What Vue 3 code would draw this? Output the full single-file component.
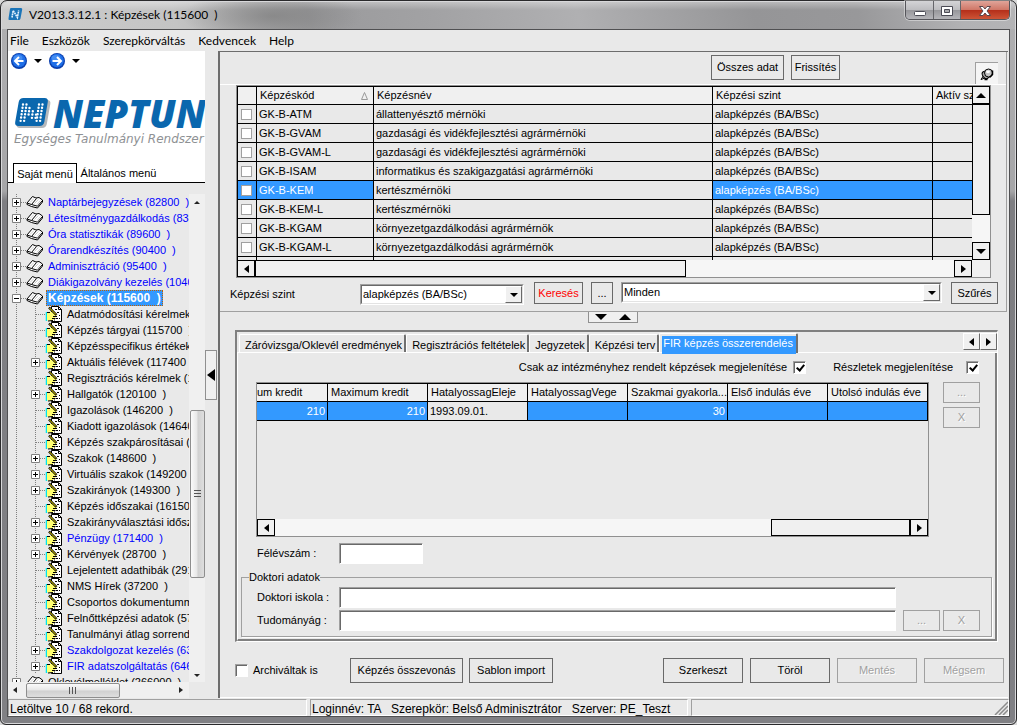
<script setup>
import { ref } from 'vue'

const title = 'V2013.3.12.1 : Képzések (115600  )'
const session = 'Loginnév: TA   Szerepkör: Belső Adminisztrátor   Szerver: PE_Teszt'
const menus = ['File', 'Eszközök', 'Szerepkörváltás', 'Kedvencek', 'Help']

const tree = [
  { t: 'Naptárbejegyzések (82800  )', top: true, plus: '+', blue: true },
  { t: 'Létesítménygazdálkodás (83400  )', top: true, plus: '+', blue: true },
  { t: 'Óra statisztikák (89600  )', top: true, plus: '+', blue: true },
  { t: 'Órarendkészítés (90400  )', top: true, plus: '+', blue: true },
  { t: 'Adminisztráció (95400  )', top: true, plus: '+', blue: true },
  { t: 'Diákigazolvány kezelés (104000  )', top: true, plus: '+', blue: true },
  { t: 'Képzések (115600  )', top: true, plus: '-', selected: true },
  { t: 'Adatmódosítási kérelmek' },
  { t: 'Képzés tárgyai (115700  )' },
  { t: 'Képzésspecifikus értékek' },
  { t: 'Aktuális félévek (117400  )', plus: '+' },
  { t: 'Regisztrációs kérelmek (118000  )' },
  { t: 'Hallgatók (120100  )', plus: '+' },
  { t: 'Igazolások (146200  )' },
  { t: 'Kiadott igazolások (146400  )' },
  { t: 'Képzés szakpárosításai (147000  )' },
  { t: 'Szakok (148600  )', plus: '+' },
  { t: 'Virtuális szakok (149200  )', plus: '+' },
  { t: 'Szakirányok (149300  )', plus: '+' },
  { t: 'Képzés időszakai (161500  )' },
  { t: 'Szakirányválasztási időszakok', plus: '+' },
  { t: 'Pénzügy (171400  )', plus: '+', blue: true },
  { t: 'Kérvények (28700  )', plus: '+' },
  { t: 'Lejelentett adathibák (29100  )' },
  { t: 'NMS Hírek (37200  )' },
  { t: 'Csoportos dokumentummentés' },
  { t: 'Felnőttképzési adatok (57000  )' },
  { t: 'Tanulmányi átlag sorrend' },
  { t: 'Szakdolgozat kezelés (63000  )', plus: '+', blue: true },
  { t: 'FIR adatszolgáltatás (64600  )', plus: '+', blue: true },
  { t: 'Oklevélmelléklet (266000  )', top: true, plus: '+' },
]

const rows = [
  ['GK-B-ATM', 'állattenyésztő mérnöki'],
  ['GK-B-GVAM', 'gazdasági és vidékfejlesztési agrármérnöki'],
  ['GK-B-GVAM-L', 'gazdasági és vidékfejlesztési agrármérnöki'],
  ['GK-B-ISAM', 'informatikus és szakigazgatási agrármérnöki'],
  ['GK-B-KEM', 'kertészmérnöki'],
  ['GK-B-KEM-L', 'kertészmérnöki'],
  ['GK-B-KGAM', 'környezetgazdálkodási agrármérnök'],
  ['GK-B-KGAM-L', 'környezetgazdálkodási agrármérnök'],
]
const current = ref(4)

const tabs = [
  'Záróvizsga/Oklevél eredmények',
  'Regisztrációs feltételek',
  'Jegyzetek',
  'Képzési terv',
  'FIR képzés összerendelés',
]
const activeTab = ref(4)
const onlyAssigned = ref(true)
const details = ref(true)
const archived = ref(false)
</script>

<template>
  <div class="window">
    <header class="titlebar">
      <svg class="app-icon" width="15" height="14" viewBox="0 0 15 14" aria-hidden="true">
        <path d="M3 1h10q1.500 0 1.200 1.500l-1.700 9q-.3 1.500-1.800 1.500H1.500Q.2 13 .5 11.500L2 2Q2.200 1 3 1z" fill="#1a74b8" />
        <path d="M4 10.500l1.200-7 4.200 7 1.300-7" fill="none" stroke="#e4f3ff" stroke-width="1.600" stroke-dasharray="1.800 .6" />
      </svg>
      <h1 class="title">{{ title }}</h1>
      <div class="caption">
        <button class="cap min" aria-label="Kis méret">
          <svg width="14" height="12" viewBox="0 0 14 12"><rect x="1.500" y="6.500" width="11" height="4" rx="1" fill="#fff" stroke="#4b4b55" /></svg>
        </button>
        <button class="cap max" aria-label="Teljes méret">
          <svg width="14" height="12" viewBox="0 0 14 12"><path d="M1.500 1.500h11v9h-11z" fill="#fff" stroke="#4b4b55" /><path d="M4.500 4.500h5v3h-5z" fill="#a9a9ad" stroke="#4b4b55" /></svg>
        </button>
        <button class="cap close" aria-label="Bezárás">
          <svg width="14" height="12" viewBox="0 0 14 12"><path d="M1.500 1.500h3.500l2 2.500 2-2.500h3.500L9 6l3.500 4.500H9L7 8l-2 2.500H1.500L5 6z" fill="#fff" stroke="#57454b" /></svg>
        </button>
      </div>
    </header>

    <div class="client">
      <nav class="menubar">
        <button v-for="m in menus" :key="m" class="menu">{{ m }}</button>
      </nav>

      <div class="body">
        <aside class="side">
          <div class="brand">
            <div class="history">
              <button class="nav-btn" aria-label="Vissza">
                <svg width="16" height="16" viewBox="0 0 16 16"><circle cx="8" cy="8" r="8" fill="#0b3fae" /><circle cx="8" cy="7.500" r="6.800" fill="#1f6fe8" /><ellipse cx="7" cy="5" rx="4.500" ry="3" fill="#5aa0f8" opacity=".6" /><path d="M12.500 8H4.500M8 4L4 8l4 4" fill="none" stroke="#fff" stroke-width="2" /></svg>
              </button>
              <button class="drop" aria-label="Előzmények"><i class="tri down"></i></button>
              <button class="nav-btn" aria-label="Előre">
                <svg width="16" height="16" viewBox="0 0 16 16"><circle cx="8" cy="8" r="8" fill="#0b3fae" /><circle cx="8" cy="7.500" r="6.800" fill="#1f6fe8" /><ellipse cx="7" cy="5" rx="4.500" ry="3" fill="#5aa0f8" opacity=".6" /><path d="M3.500 8h8M8 4l4 4-4 4" fill="none" stroke="#fff" stroke-width="2" /></svg>
              </button>
              <button class="drop" aria-label="Következők"><i class="tri down"></i></button>
            </div>
            <div class="logo">
              <svg class="logo-mark" width="38" height="33" viewBox="0 0 38 33" aria-hidden="true">
                <path d="M11 3h22q4 0 3.300 4l-3.500 20q-.8 4-4.800 4H6q-4 0-3.300-4L6.200 7Q7 3 11 3z" fill="#b5b8bb" />
                <path d="M9.500 1h21q4 0 3.300 4l-3.500 20q-.8 4-4.800 4H4.500q-4 0-3.300-4L4.700 5Q5.500 1 9.500 1z" fill="#0a67ae" />
                <g fill="none" stroke="#fff" stroke-width="2.400" stroke-linecap="round">
                  <path d="M9 7.500L6.600 24" stroke-dasharray="0 3.300" />
                  <path d="M12.500 7.500L10.100 24" stroke-dasharray="0 3.300" />
                  <path d="M15.500 11L14.600 17.600" stroke-dasharray="0 3.300" />
                  <path d="M18.800 14.300L17.900 21" stroke-dasharray="0 3.300" />
                  <path d="M22 17.600L21.100 24" stroke-dasharray="0 3.300" />
                  <path d="M25 7.500L22.600 24" stroke-dasharray="0 3.300" />
                  <path d="M28.500 7.500L26.100 24" stroke-dasharray="0 3.300" />
                </g>
              </svg>
              <span class="logo-text">NEPTUN</span>
            </div>
            <div class="tagline">Egységes Tanulmányi Rendszer</div>
            <div class="side-tabs" role="tablist">
              <button class="side-tab on" role="tab">Saját menü</button>
              <button class="side-tab" role="tab">Általános menü</button>
            </div>
          </div>

          <div class="tree-wrap">
            <div class="tree-col">
              <ul class="tree">
                <li v-for="n in tree" :key="n.t" :class="['node', { blue: n.blue, sel: n.selected }]">
                  <svg v-if="n.top" width="38" height="16" viewBox="0 0 38 16" aria-hidden="true">
                    <path d="M8.500 0v16M13 8.500h6" stroke="#808080" stroke-dasharray="1 1" fill="none" />
                    <path d="M4.500 4.500h8v8h-8z" fill="#fff" stroke="#808080" />
                    <path :d="n.plus === '+' ? 'M6 8.500h5M8.500 6v5' : 'M6 8.500h5'" stroke="#000" fill="none" />
                    <path d="M19 9l5.500-6.500 3.500 1.500 3-.5 3.500 2.500v2l-5 6-6-1.500-4.500-2z" fill="#fff" stroke="#000" />
                    <path d="M19 9l4.500 1.500L28.500 4.500M23.500 10.500l6 1.700L34.500 6.500" fill="none" stroke="#000" />
                    <path d="M22 8.500l4-4M26.500 9.500l4-4M29 10.500l3.500-4" fill="none" stroke="#b8b8b8" stroke-width=".7" />
                  </svg>
                  <svg v-else width="57" height="16" viewBox="0 0 57 16" aria-hidden="true">
                    <path d="M8.500 0v16M27.500 0v16M28 8.500h9" stroke="#808080" stroke-dasharray="1 1" fill="none" />
                    <template v-if="n.plus">
                      <path d="M23.500 4.500h8v8h-8z" fill="#fff" stroke="#808080" />
                      <path d="M25 8.500h5M27.500 6v5" stroke="#000" fill="none" />
                    </template>
                    <path d="M43.500.5h7l3 3v12h-10z" fill="#fff" stroke="#000" />
                    <path d="M50.500.5v3h3" fill="none" stroke="#000" />
                    <path d="M47 3.500h2M49 6.500h2M51 9.500h1M48 12.500h2M51 12.500h1M46 14h1" fill="none" stroke="#000" />
                    <path d="M38.500 6v9" stroke="#00e5ee" stroke-width="1.500" />
                    <path d="M39 6.500l4-1 5 2.500 1 1.500-2 1 .5 1.500-1.500 1-1 1.500-4 .5-2-1z" fill="#ffff70" />
                    <path d="M39 6.500h3M45 10.500h4M44 12.500h3.500M40 15l5-.5" fill="none" stroke="#000" />
                    <path d="M41 1.500l7.500 7.500" stroke="#000" stroke-width="2.400" />
                    <path d="M41.500 2l6.500 6.500" stroke="#ffee00" stroke-width="1" />
                  </svg>
                  <span class="node-text">{{ n.t }}</span>
                </li>
              </ul>
              <div class="w7 h">
                <i class="tri left sm"></i><div class="w7-thumb-h"><i></i><i></i><i></i></div><i class="tri right sm push"></i>
              </div>
            </div>
            <div class="w7 v">
              <i class="tri up sm"></i>
              <div class="w7-thumb-v"><i></i><i></i><i></i></div>
              <i class="tri down sm"></i>
            </div>
          </div>
        </aside>

        <div class="split"><button class="split-btn" aria-label="Menü elrejtése"><i class="tri left big"></i></button></div>

        <main class="main">
          <section class="upper">
            <div class="tools">
              <button class="btn">Összes adat</button>
              <button class="btn fresh">Frissítés</button>
              <button class="pin" aria-label="Rögzítés">
                <svg width="14" height="14" viewBox="0 0 14 14"><path d="M4 8l-3 4.500L5 11z" fill="#fff" stroke="#000" /><ellipse cx="5.500" cy="8" rx="2.800" ry="4" transform="rotate(-35 5.500 8)" fill="#a8a8a8" stroke="#000" /><ellipse cx="8.500" cy="6" rx="4" ry="4" fill="#c4c4c4" stroke="#000" /><ellipse cx="8" cy="4.800" rx="2" ry="1.400" fill="#fff" /><path d="M12.500 3.500v4l-3 3M4.500 12.500h3" fill="none" stroke="#000" stroke-width="1.500" /></svg>
              </button>
            </div>

            <div class="gridbox">
              <div class="gridmain">
                <div class="table-clip">
                  <table class="grid">
                    <colgroup><col class="c1" /><col class="c2" /><col /><col class="c4" /><col class="c5" /></colgroup>
                    <thead>
                      <tr>
                        <th></th>
                        <th><span class="sorted">Képzéskód <svg width="7" height="8" viewBox="0 0 7 8"><path d="M.5 7.500L3.500.5l3 7z" fill="none" stroke="#999" /></svg></span></th>
                        <th>Képzésnév</th><th>Képzési szint</th><th>Aktív szakok</th>
                      </tr>
                    </thead>
                    <tbody>
                      <tr v-for="(r, i) in rows" :key="r[0]" :class="{ cur: i === current }" @click="current = i">
                        <td class="chk"><input type="checkbox" :aria-label="r[0]" /></td>
                        <td>{{ r[0] }}</td><td class="name">{{ r[1] }}</td><td>alapképzés (BA/BSc)</td><td></td>
                      </tr>
                      <tr><td></td><td></td><td class="name"></td><td></td><td></td></tr>
                    </tbody>
                  </table>
                </div>
                <div class="sb h">
                  <button class="sbb" aria-label="Balra"><i class="tri left"></i></button>
                  <div class="thumb t1"></div><div class="track"></div>
                  <button class="sbb" aria-label="Jobbra"><i class="tri right"></i></button>
                </div>
              </div>
              <div class="sb v">
                <button class="sbb" aria-label="Fel"><i class="tri up wide5"></i></button>
                <div class="thumb t2"></div><div class="track"></div>
                <button class="sbb" aria-label="Le"><i class="tri down wide5"></i></button>
              </div>
            </div>

            <div class="filter">
              <label for="level" class="filter-label">Képzési szint</label>
              <div class="combo level">
                <select id="level"><option>alapképzés (BA/BSc)</option></select>
                <span class="combo-arrow"><i class="tri down"></i></span>
              </div>
              <button class="btn low search">Keresés</button>
              <button class="btn low dots">...</button>
              <div class="combo all">
                <select aria-label="Szűrő"><option>Minden</option></select>
                <span class="combo-arrow"><i class="tri down"></i></span>
              </div>
              <button class="btn low szur">Szűrés</button>
            </div>
          </section>

          <div class="hsplit">
            <button aria-label="Lefelé"><i class="tri down big"></i></button><button aria-label="Felfelé"><i class="tri up big"></i></button>
          </div>

          <section class="tabbox">
            <div class="tabs" role="tablist">
              <button v-for="(t, i) in tabs" :key="t" role="tab" :class="['tab', { on: i === activeTab }]" @click="activeTab = i"><span>{{ t }}</span></button>
              <div class="tabnav">
                <button aria-label="Előző lap"><i class="tri left"></i></button><button aria-label="Következő lap"><i class="tri right"></i></button>
              </div>
            </div>
            <div class="page">
              <div class="checks">
                <label class="ck">Csak az intézményhez rendelt képzések megjelenítése <input v-model="onlyAssigned" class="cb" type="checkbox" /></label>
                <label class="ck wide">Részletek megjelenítése <input v-model="details" class="cb" type="checkbox" /></label>
              </div>
              <div class="fir">
                <div class="firgrid">
                  <div class="fir-clip">
                    <table class="grid two">
                      <colgroup><col class="f1" /><col /><col /><col /><col /><col /><col /></colgroup>
                      <thead>
                        <tr><th class="cut">um kredit</th><th>Maximum kredit</th><th>HatalyossagEleje</th><th>HatalyossagVege</th><th>Szakmai gyakorla...</th><th>Első indulás éve</th><th>Utolsó indulás éve</th></tr>
                      </thead>
                      <tbody>
                        <tr class="cur"><td class="num">210</td><td class="num">210</td><td class="name">1993.09.01.</td><td></td><td class="num">30</td><td></td><td></td></tr>
                      </tbody>
                    </table>
                  </div>
                  <div class="sb h">
                    <button class="sbb" aria-label="Balra"><i class="tri left"></i></button>
                    <div class="track"></div><div class="thumb t3"></div>
                    <button class="sbb" aria-label="Jobbra"><i class="tri right"></i></button>
                  </div>
                </div>
                <div class="firbtns">
                  <button class="btn small" disabled>...</button>
                  <button class="btn small" disabled>X</button>
                </div>
              </div>
              <div class="field first"><label for="fel">Félévszám :</label><input id="fel" class="tb short" type="text" /></div>
              <fieldset class="doc">
                <legend>Doktori adatok</legend>
                <div class="field"><label for="isk">Doktori iskola :</label><input id="isk" class="tb" type="text" /><span class="gap"></span></div>
                <div class="field"><label for="tud">Tudományág :</label><input id="tud" class="tb" type="text" />
                  <span class="gap"><button class="btn small" disabled>...</button><button class="btn small" disabled>X</button></span>
                </div>
              </fieldset>
            </div>
          </section>

          <footer class="actions">
            <label class="arch"><input v-model="archived" class="cb" type="checkbox" /> Archiváltak is</label>
            <button class="btn merge">Képzés összevonás</button>
            <button class="btn import">Sablon import</button>
            <span class="record-actions">
              <button class="btn act">Szerkeszt</button>
              <button class="btn act">Töröl</button>
              <button class="btn act" disabled>Mentés</button>
              <button class="btn act" disabled>Mégsem</button>
            </span>
          </footer>
        </main>
      </div>

      <div class="status">
        <div class="cell s1">Letöltve 10 / 68 rekord.</div>
        <div class="cell s2">{{ session }}</div>
        <div class="cell s3">
          <svg width="14" height="14" viewBox="0 0 14 14" aria-hidden="true"><path d="M1 14L14 1M5 14l9-9M9 14l5-5" stroke="#8c8c8c" stroke-width="1.500" /></svg>
        </div>
      </div>
    </div>
  </div>
</template>

<style>
body { background: #d8d8d8; overflow: hidden; }
</style>

<style scoped>
* { box-sizing: border-box; }
button, input, select { font: inherit; color: inherit; margin: 0; padding: 0; border-radius: 0; }
button { background: none; border: 0; white-space: nowrap; }
svg { display: block; flex: none; }

.window {
  height: 100vh; display: flex; flex-direction: column;
  border: 1px solid #2a2a2c; border-radius: 7px 7px 6px 6px;
  padding: 0 6px 7px;
  background: linear-gradient(#b0b0b2 0, #a6a6a8 190px, #7e7e82 200px, #808084 100%);
  box-shadow: inset 0 0 0 1px #d8d8da;
  font: 11px/13px "Liberation Sans", Arial, sans-serif; color: #000;
}
.titlebar {
  flex: none; height: 27px; display: flex; align-items: flex-start; margin: 1px -5px 0; padding-left: 6px;
  border-radius: 5px 5px 0 0;
  background:
    radial-gradient(ellipse 90px 26px at 270px 14px, #77777799, #77777700),
    linear-gradient(#ffffff55, #ffffff00 8px),
    linear-gradient(75deg, #cdcdcd 0, #c4c4c4 170px, #9a9a9c 300px, #a2a2a4 420px, #b0b0b2 560px, #959597 730px, #98989a 830px, #b2b2b4 930px, #b4b4b6 100%);
}
.app-icon { margin-top: 5px; }
.title { margin: 5px 0 0 6px; font: 12px/16px Lato, "Open Sans", sans-serif; white-space: pre; }
.caption { display: flex; margin: -1px 5px 0 auto; height: 19px; border: 1px solid #55555a; border-top: 0; border-radius: 0 0 5px 5px; overflow: hidden; box-shadow: 0 0 0 1px #ffffff66; }
.cap { width: 28px; height: 19px; display: flex; justify-content: center; align-items: center; background: linear-gradient(#d4d4d6, #bcbcbf 48%, #98989c 50%, #b8b8bc); border-right: 1px solid #66666a; }
.max { width: 27px; }
.close { width: 48px; border: 0; background: linear-gradient(#e0a499, #cf7565 48%, #b5301b 50%, #d0593a); }

.client { flex: 1; min-height: 0; display: flex; flex-direction: column; background: #e9e9e9; border: 1px solid #505052; }
.menubar { flex: none; height: 21px; display: flex; align-items: center; padding-left: 2px; gap: 13px; font: 12px/16px Lato, "Open Sans", sans-serif; }
.body { flex: 1; min-height: 0; display: flex; }

.side { width: 197px; flex: none; display: flex; flex-direction: column; overflow: hidden; }
.brand { flex: none; background: #fff; display: flex; flex-direction: column; overflow: hidden; }
.history { height: 20px; display: flex; align-items: center; padding-left: 3px; }
.nav-btn { width: 16px; height: 16px; }
.drop { width: 22px; height: 16px; display: flex; align-items: center; justify-content: center; }
.logo { height: 59px; padding: 26px 0 0 6px; display: flex; align-items: flex-start; gap: 1px; }
.logo-text { color: #0a67ae; font: italic 800 38px/33px "Open Sans", "Noto Sans", sans-serif; }
.tagline { padding-left: 6px; height: 18px; color: #8e9194; font: italic 12px/18px "DejaVu Sans", Verdana, sans-serif; white-space: nowrap; }
.side-tabs { display: flex; margin-top: 15px; height: 20px; align-items: stretch; border-bottom: 1px solid #000; }
.side-tab { width: 83px; padding-top: 2px; }
.side-tab.on { width: 64px; margin: 0 0 -1px 5px; border: 1px solid #000; border-bottom: 0; background: #fff; }

.tree-wrap { flex: 1; min-height: 0; display: flex; margin-top: 11px; }
.tree-col { width: 181px; display: flex; flex-direction: column; background: #ececec; }
.tree { flex: 1; min-height: 0; overflow: hidden; margin: 0; padding: 0; list-style: none; background: #e9e9e9; }
.node { display: flex; align-items: center; height: 16px; white-space: pre; }
.node-text { padding: 0 2px; height: 16px; line-height: 16px; }
.blue { color: #0000ff; }
.sel .node-text { background: #3399ff; color: #fff; font-weight: bold; font-size: 12px; outline: 1px dotted #c06000; outline-offset: -1px; }
.w7 { flex: none; display: flex; background: #f0f0f0; align-items: center; }
.w7.h { height: 16px; padding: 0 6px 0 5px; }
.w7.v { width: 16px; flex-direction: column; margin-bottom: 16px; padding: 7px 0 5px; }
.w7-thumb-h { width: 94px; height: 15px; margin-left: 9px; border: 1px solid #8e8e8e; border-radius: 2px; background: linear-gradient(#fafafa, #e6e6e6 48%, #d0d0d0 52%, #dedede); display: flex; gap: 1px; justify-content: center; align-items: center; }
.w7-thumb-h i { width: 2px; height: 7px; border-left: 1px solid #555; }
.w7-thumb-v { margin: auto 0 96px; height: 168px; width: 15px; border: 1px solid #8e8e8e; border-radius: 2px; background: linear-gradient(90deg, #fafafa, #e6e6e6 48%, #d0d0d0 52%, #dedede); display: flex; flex-direction: column; gap: 1px; align-items: center; justify-content: center; }
.w7-thumb-v i { height: 2px; width: 7px; border-top: 1px solid #555; }
.push { margin-left: auto; }

.tri { display: block; flex: none; width: 0; height: 0; border: 4px solid transparent; }
.tri.down { border-top-color: #000; border-bottom: 0; }
.tri.up { border-bottom-color: #000; border-top: 0; }
.tri.left { border-right: 5px solid #000; border-left: 0; }
.tri.right { border-left: 5px solid #000; border-right: 0; }
.tri.wide5 { border-left-width: 5px; border-right-width: 5px; }
.tri.wide5.up { border-bottom-width: 5px; }
.tri.wide5.down { border-top-width: 5px; }
.tri.sm { border-width: 3px; opacity: .85; }
.tri.sm.down { border-bottom: 0; }
.tri.sm.up { border-top: 0; }
.tri.sm.left { border-left: 0; border-right-width: 4px; }
.tri.sm.right { border-right: 0; border-left-width: 4px; }
.tri.big { border-width: 6px; }
.tri.big.down { border-bottom: 0; }
.tri.big.up { border-top: 0; }
.tri.big.left { border-left: 0; border-right-width: 8px; }

.split { width: 13px; flex: none; display: flex; align-items: center; }
.split-btn { width: 12px; height: 50px; border: 1px solid #909090; background: #f0f0f0; display: flex; align-items: center; padding-left: 1px; }

.main { flex: 1; min-width: 0; display: flex; flex-direction: column; border-left: 2px solid #6d6d6d; border-top: 1px solid #6d6d6d; margin-right: 1px; }
.btn { height: 25px; border: 1px solid #696969; background: #e9e9e9; text-align: center; flex: none; }
.btn:disabled { color: #a0a0a0; text-shadow: 1px 1px #fff; border-color: #a0a0a0; }
.low { height: 22px; }

.upper { flex: none; border-right: 1px solid #a0a0a0; border-bottom: 1px solid #a0a0a0; margin-right: 1px; }
.tools { height: 33px; display: flex; justify-content: flex-end; padding: 3px 8px 0 0; gap: 7px; border-bottom: 1px solid #fff; }
.tools .btn { width: 73px; }
.tools .fresh { width: 49px; }
.pin { width: 23px; height: 22px; margin: 7px 0 0 128px; border-left: 1px solid #a0a0a0; border-top: 1px solid #a0a0a0; background: #f5f5f5; display: flex; align-items: center; justify-content: center; }
.gridbox { margin: 0 15px 0 16px; display: flex; border: 1px solid #909090; background: #f0f0f0; }
.gridmain { flex: 1; min-width: 0; display: flex; flex-direction: column; }
.table-clip { height: 174px; overflow: hidden; border-left: 1px solid #000; border-top: 1px solid #000; background: #e9e9e9; }
.grid { width: 100%; table-layout: fixed; border-collapse: separate; border-spacing: 0; }
.grid th { height: 18px; padding: 0 2px 0 3px; text-align: left; font-weight: normal; background: #f0f0f0; overflow: hidden; white-space: nowrap; border-right: 1px solid #000; border-bottom: 1px solid #000; }
.grid td { height: 19px; padding: 0 2px 0 2px; border-right: 1px solid #000; border-bottom: 1px solid #000; white-space: nowrap; overflow: hidden; }
.grid th:last-child, .grid td:last-child { border-right: 0; }
.c1 { width: 19px; } .c2 { width: 117px; } .c4 { width: 220px; } .c5 { width: 39px; }
.sorted { display: flex; align-items: center; justify-content: space-between; padding-right: 3px; }
.grid .chk { padding: 0 3px; }
.chk input { appearance: none; display: block; width: 11px; height: 11px; border: 1px solid #a0a0a0; background: #fff; }
.cur td { background: #3399ff; color: #fff; }
.cur .name { background: #e9e9e9; color: #000; }

.sb { display: flex; flex: none; }
.sb.h { height: 17px; }
.sb.v { width: 18px; flex-direction: column; margin-bottom: 17px; }
.sbb { width: 18px; height: 17px; flex: none; border: 1px solid #000; background: #f0f0f0; display: flex; align-items: center; justify-content: center; }
.sb.v .sbb { height: 18px; }
.track { flex: 1; background: #f6f6f6; }
.thumb { border: 1px solid #000; background: #f0f0f0; flex: none; }
.t1 { width: 60%; max-width: 431px; }
.t2 { height: 111px; }
.t3 { width: 139px; }

.filter { height: 33px; display: flex; padding: 4px 8px 0 10px; align-items: flex-start; }
.filter-label { width: 130px; padding-top: 6px; }
.combo { position: relative; height: 21px; margin-top: 2px; border: 1px solid #a0a0a0; border-right-color: #fff; border-bottom-color: #fff; }
.combo select { display: block; appearance: none; width: 100%; height: 100%; border: 1px solid #696969; border-right-color: #e3e3e3; border-bottom-color: #e3e3e3; background: #fff; padding-left: 1px; }
.combo-arrow { position: absolute; right: 1px; top: 1px; bottom: 1px; width: 17px; background: #f0f0f0; border: 1px solid #fff; border-right-color: #696969; border-bottom-color: #696969; display: flex; align-items: center; justify-content: center; pointer-events: none; }
.level { width: 164px; }
.search { width: 49px; margin-left: 10px; color: #ff0000; }
.dots { width: 22px; margin: 0 8px; }
.all { flex: 1; margin-top: 0; }
.szur { width: 47px; margin-left: 9px; }

.hsplit { flex: none; width: 50px; height: 11px; margin-left: 368px; border: 1px solid #909090; border-top: 0; background: #f0f0f0; display: flex; align-items: center; justify-content: space-around; }

.tabbox { flex: 1; min-height: 0; margin: 7px 10px 0 15px; border: 2px solid #808080; border-right: 1px solid #fff; border-bottom: 1px solid #fff; display: flex; flex-direction: column; padding-top: 1px; }
.tabs { flex: none; height: 20px; display: flex; align-items: flex-end; border-bottom: 1px solid #fff; padding-left: 2px; }
.tab { height: 18px; padding: 3px 2px 0 5px; border-left: 1px solid #fff; border-top: 1px solid #fff; border-right: 2px solid #707070; border-radius: 2px 2px 0 0; }
.tab.on { height: 20px; margin-bottom: -1px; padding: 2px 0 0 2px; min-width: 139px; text-align: left; }
.tab.on span { display: block; height: 18px; line-height: 15px; background: #3399ff; color: #fff; padding-left: 1px; }
.tabnav { margin: 0 0 auto auto; display: flex; }
.tabnav button { width: 17px; height: 17px; border: 1px solid #fff; border-right-color: #696969; border-bottom-color: #696969; display: flex; align-items: center; justify-content: center; background: #f0f0f0; }
.page { flex: 1; min-height: 0; border-left: 1px solid #fff; border-right: 2px solid #808080; border-bottom: 2px solid #808080; display: flex; flex-direction: column; }
.checks { display: flex; justify-content: flex-end; gap: 27px; height: 29px; align-items: center; padding-right: 16px; }
.ck { display: flex; align-items: center; gap: 6px; }
.ck.wide { gap: 13px; }
.cb { appearance: none; flex: none; width: 13px; height: 13px; border: 1px solid #a0a0a0; border-right-color: #fff; border-bottom-color: #fff; background: #fff; box-shadow: inset 1px 1px #696969; position: relative; }
.cb:checked::after { content: ""; position: absolute; left: 4px; top: 1px; width: 3px; height: 6px; border: solid #000; border-width: 0 2px 2px 0; transform: rotate(40deg); }
.fir { flex: 1; min-height: 0; display: flex; padding: 0 15px 0 18px; gap: 14px; }
.firgrid { flex: 1; min-width: 0; display: flex; flex-direction: column; border: 1px solid #909090; }
.fir-clip { flex: 1; min-height: 0; border-top: 1px solid #000; overflow: hidden; }
.f1 { width: 71px; }
.two tr > *:last-child { border-right: 1px solid #000; }
.grid .cut { padding-left: 0; }
.grid .num { text-align: right; }
.firbtns { display: flex; flex-direction: column; gap: 4px; }
.small { width: 37px; height: 21px; }
.field { display: flex; align-items: center; height: 23px; }
.field label { width: 82px; flex: none; }
.field.first { padding-left: 19px; height: 33px; }
.tb { flex: 1; min-width: 0; height: 21px; background: #fff; border: 1px solid #a0a0a0; border-right-color: #fff; border-bottom-color: #fff; box-shadow: inset 1px 1px #696969; padding: 0 3px; }
.short { flex: none; width: 84px; }
.gap { width: 84px; display: flex; justify-content: flex-end; gap: 3px; }
.doc { margin: 1px 3px 2px 3px; padding: 2px 11px 4px 15px; border: 1px solid #a0a0a0; box-shadow: 1px 1px #fff; min-width: 0; }
.doc legend { padding: 0; margin-left: -8px; }

.actions { flex: none; height: 56px; display: flex; align-items: center; padding: 2px 4px 0 15px; border-bottom: 1px solid #fff; }
.arch { display: flex; align-items: center; gap: 5px; width: 115px; }
.merge { width: 113px; }
.import { width: 84px; margin-left: 6px; }
.record-actions { display: flex; gap: 7px; margin-left: auto; }
.act { width: 80px; }

.status { flex: none; height: 18px; display: flex; gap: 3px; font-size: 12px; line-height: 18px; white-space: pre; padding-top: 1px; }
.cell { border-top: 1px solid #a0a0a0; border-left: 1px solid #a0a0a0; border-right: 1px solid #fff; border-bottom: 1px solid #fff; padding-left: 1px; }
.s1 { width: 299px; }
.s2 { width: 378px; }
.s3 { flex: 1; display: flex; justify-content: flex-end; align-items: flex-end; }
</style>
